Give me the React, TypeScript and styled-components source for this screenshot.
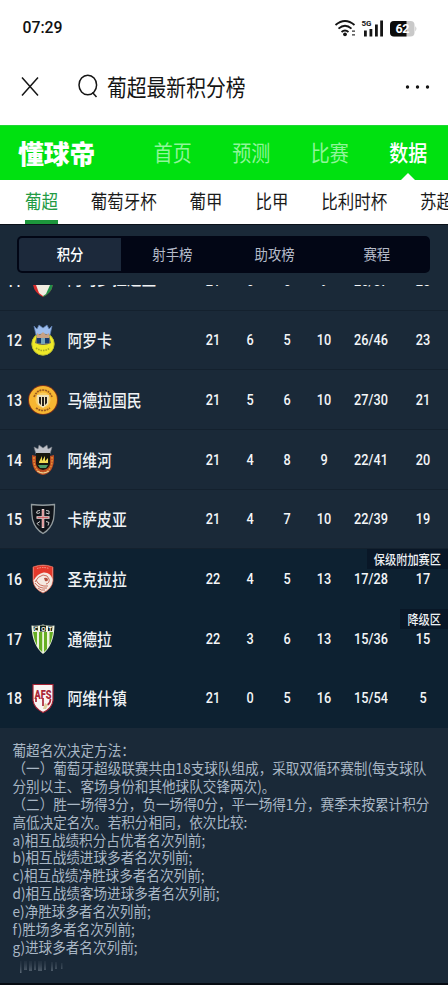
import type { ReactNode } from "react";
import styled, { createGlobalStyle, css } from "styled-components";

const GlobalStyle = createGlobalStyle`
  * {
    box-sizing: border-box;
  }
  body {
    margin: 0;
    background: #fff;
    font-family: "Noto Sans CJK SC", sans-serif;
  }
`;

// condensed look of the app font
const tall = css`
  display: inline-block;
  white-space: nowrap;
  transform: scaleY(1.14);
`;

const Page = styled.div`
  width: 448px;
  height: 1000px;
  overflow: hidden;
  display: flex;
  flex-direction: column;
  background: #fff;
`;

const StatusBar = styled.div`
  height: 56px;
  padding: 0 31px 0 22.5px;
  display: flex;
  align-items: center;
  justify-content: space-between;
`;

const Clock = styled.span`
  font: 500 15.8px/20px Roboto, sans-serif;
  color: #111;
`;

const SearchBar = styled.div`
  height: 69px;
  padding: 0 17px 7px 20px;
  display: flex;
  align-items: center;
`;

const SearchText = styled.span`
  ${tall}
  flex: 1;
  margin-left: 8px;
  font-size: 19.8px;
  line-height: 24px;
  color: #141414;
`;

const MainNav = styled.nav`
  height: 55px;
  display: flex;
  align-items: center;
  background: #00e110;
  border-top: 1px solid #1fd735;
`;

const Logo = styled.span`
  width: 133.5px;
  padding-left: 18px;
  font-size: 25.8px;
  line-height: 30px;
  font-weight: 900;
  color: #fff;
`;

const NavItem = styled.div<{ $active?: boolean }>`
  position: relative;
  width: 78.5px;
  height: 54px;
  padding-bottom: 3px;
  display: flex;
  align-items: center;
  justify-content: center;
  font-size: 19px;
  font-weight: ${(p) => (p.$active ? 500 : 400)};
  color: ${(p) => (p.$active ? "#fff" : "#90f69a")};
  ${(p) =>
    p.$active &&
    css`
      &::after {
        content: "";
        position: absolute;
        bottom: 0;
        left: 32px;
        border: 7px solid transparent;
        border-top: 0;
        border-bottom: 7px solid #fff;
      }
    `}
`;

const Label = styled.span`
  ${tall}
`;

const SubNav = styled.div`
  height: 44px;
  padding-left: 25px;
  display: flex;
  gap: 32.8px;
  overflow: hidden;
`;

const SubItem = styled.div<{ $active?: boolean }>`
  flex: none;
  height: 44px;
  font-size: 16.5px;
  line-height: 43px;
  color: ${(p) => (p.$active ? "#229a43" : "#1a1a1a")};
  border-bottom: 4px solid ${(p) => (p.$active ? "#1d963c" : "transparent")};
`;

const Panel = styled.main`
  height: 761px;
  background: #1a2938;
  border-top: 1px solid #0b1119;
  border-bottom: 2px solid #060b12;
`;

const SegmentWrap = styled.div`
  height: 60px;
  padding: 11px 18px 0 17px;
`;

const Segments = styled.div`
  height: 37px;
  padding: 2px;
  display: flex;
  border-radius: 5px;
  background: #020615;
  overflow: hidden;
`;

const Segment = styled.div<{ $active?: boolean }>`
  flex: 1;
  padding-bottom: 4px;
  display: flex;
  align-items: center;
  justify-content: center;
  font-size: 13.4px;
  font-weight: ${(p) => (p.$active ? 500 : 400)};
  color: ${(p) => (p.$active ? "#fff" : "#b5bbc9")};
  background: ${(p) => (p.$active ? "#1c293b" : "transparent")};
  border-radius: 3px 0 0 3px;
`;

const Row = styled.div<{ $dark?: boolean }>`
  position: relative;
  flex: none;
  height: 59.7px;
  padding-top: 1px;
  display: grid;
  grid-template-columns: 28px 30px 136.5px 37px 37px 37px 37px 57px 47px;
  align-items: center;
  background: ${(p) => (p.$dark ? "#0d2131" : "#1a2938")};
  border-bottom: 1px solid ${(p) => (p.$dark ? "#0d2131" : "#14212e")};
`;

const Rank = styled.span`
  ${tall}
  text-align: center;
  font: 500 14.2px/20px Roboto, sans-serif;
  letter-spacing: -0.4px;
  color: #f4f6f8;
  transform: scaleY(1.22);
`;

const Crest = styled.svg`
  display: block;
  width: 30px;
  height: 34px;
`;

const Team = styled.span`
  ${tall}
  padding-left: 9.5px;
  font-size: 14.8px;
  line-height: 20px;
  font-weight: 500;
  color: #f0f3f5;
`;

const Stat = styled.span`
  ${tall}
  text-align: center;
  font: 500 12.7px/20px Roboto, sans-serif;
  color: #f4f6f8;
  transform: scaleY(1.22);
`;

// the row above the fold, scrolled almost out of view
const Clip = styled.div`
  height: 25.5px;
  display: flex;
  flex-direction: column;
  justify-content: flex-end;
  overflow: hidden;

  ${Crest} {
    margin-top: 2px;
  }
  ${Team} {
    margin-top: -5px;
  }
`;

const Zone = styled.div`
  position: absolute;
  top: 0;
  right: 0;
  height: 20px;
  padding: 0 7px;
  font-size: 11.2px;
  line-height: 19px;
  font-weight: 500;
  color: #eef1f4;
  background: #091727;
`;

const Notes = styled.div`
  padding: 13.5px 0 0 12.5px;
  font-size: 13.6px;
  line-height: 17.95px;
  color: #a9b7c5;
`;

const NoteLine = styled.div`
  height: 17.95px;
  white-space: pre;
  transform: scaleY(1.08);
`;

const Ghost = styled.svg`
  display: block;
  margin: 2px 0 0 2px;
`;

const crests: Record<number, ReactNode> = {
  11: (
    <>
      <path d="M5 2h20v16q0 9-10 14Q5 27 5 18z" fill="#d92c2c" />
      <path d="M15 2h10v16q0 9-10 14z" fill="#21904a" />
      <path d="M8 20l5-3h5l4 3-4 9-3 2-4-3z" fill="#f1ece0" />
    </>
  ),
  12: (
    <>
      <circle cx="15" cy="21" r="11.2" fill="#efe928" stroke="#bfc02e" />
      <path d="M6 3l3 3 2-4 4 3 4-3 2 4 3-3-2 9H8z" fill="#9dbdec" stroke="#5d7eb3" strokeWidth=".7" />
      <path d="M9 12q6-3 12 0l2 8q-8 4-16 0z" fill="#6d6c62" />
      <path d="M9 10l3 2 3-3 3 3 3-2v5H9z" fill="#c8a183" />
      <path d="M9 15h5v5H9zm7 0h5v5h-5z" fill="#173b70" />
      <path d="M13 15h4v6h-4z" fill="#77a5b7" />
      <path d="M8 25q7 5 14 0" fill="none" stroke="#a5a528" strokeWidth="1.6" strokeDasharray="1.5 1" />
    </>
  ),
  13: (
    <>
      <circle cx="15" cy="17" r="15" fill="#7e3119" />
      <circle cx="15" cy="17" r="14" fill="#f6b632" />
      <path d="M6 14q3-7 9-7t9 7M8 25q7 5 14 0" fill="none" stroke="#9a5a20" strokeWidth="1.7" strokeDasharray="2 .8" />
      <circle cx="15" cy="17" r="7.5" fill="#f8cd62" />
      <path d="M9 12h12l-1 9-5 4-5-4z" fill="#eee2bd" />
      <path d="M11 14h2v8l-2-2zm3 0h2v9h-2zm3 0h2v6l-2 2z" fill="#25211c" />
    </>
  ),
  14: (
    <>
      <path d="M6 4l4 2 1-4 4 3 4-3 1 4 4-2-2 7H8z" fill="#bfc2c9" stroke="#737982" strokeWidth=".6" />
      <path d="M4 12q-1 18 11 20 12-2 11-20l-4 1H8z" fill="#b94b22" />
      <path d="M6 14q-1 14 9 16 10-2 9-16" fill="none" stroke="#e69336" strokeWidth="1.5" strokeDasharray="2 1" />
      <path d="M8 10h14v11q-1 5-7 6-6-1-7-6z" fill="#17180f" />
      <path d="M11 19l3-6v5l3-5v5l3-3v5h-9z" fill="#f0dc54" />
      <path d="M10 22h10l-2 3h-6z" fill="#4e9c69" />
      <path d="M9 28q6 4 12 0" fill="none" stroke="#e6d7a1" />
    </>
  ),
  15: (
    <>
      <path d="M3.5 2.5Q15 4 26.5 2.5q0 8-1 15Q23 27 15 31.5 7 27 4.5 17.5q-1-7-1-15z" fill="#10141a" stroke="#929b9e" strokeWidth="1.3" />
      <path d="M15 7v19M8.5 15.5h13" stroke="#f3dedc" strokeWidth="2.5" />
      <path d="M15 8v17M9.5 15.5h11" stroke="#c8545a" strokeWidth=".9" />
      <path d="M12 8.5q-3.5-.5-3.5 2.5 2 1 3.5-.5M18 8.5l3 .5v3l-3-1M12 19.5l-3 2 2 2M18 19.5l3 1-1 3" fill="none" stroke="#c9c9c9" strokeWidth="1" />
    </>
  ),
  16: (
    <>
      <path d="M5 5Q15 1 25 5v14q-1 8-10 12Q6 27 5 19z" fill="#f5e9e1" stroke="#d9563f" strokeWidth=".7" />
      <path d="M5.5 5q9.5-3 19 0v12q-2-7-9-6.5-6 1-10 8z" fill="#e4392b" />
      <path d="M7 20q3-6 8-7 5 0 6 4t-3 5M7 21q4 6 12 5M8 18q3 7 12 6M10 26q3 3 7 2" fill="none" stroke="#c4604e" strokeWidth=".9" />
      <path d="M16 16q4-1 4 2-1 2-3 1z" fill="#b3503d" />
      <path d="M9 6.5q6-2 12 0" fill="none" stroke="#f4a393" strokeDasharray="1.5 1" />
    </>
  ),
  17: (
    <>
      <path d="M3.5 3.5q6 1 11.5-1 5.5 2 11.5 1Q26 23 15 32 4 23 3.5 3.5z" fill="#eef4dd" />
      <path d="M5 10h4v14Q6 18 5 10zm6 0h3.2v20L11 27zm5 0h3v17l-3 3zm5.5 0H25q-1 8-3.5 13z" fill="#66ae23" />
      <path d="M5.5 4.5H10V9H6zm6.5-1h6v6h-6zm8 1h4.5L24 9h-4z" fill="#111e14" />
      <text x="6" y="8.8" fontFamily="Liberation Sans" fontSize="5.6" fontWeight="700" fill="#fff" textLength="18">
        COT
      </text>
    </>
  ),
  18: (
    <>
      <path d="M5 3.5h20v16q-1 8-10 12Q6 27 5 19.5z" fill="#faf5f3" stroke="#a52334" strokeWidth="1.2" />
      <text x="6.5" y="17.5" fontFamily="Roboto" fontSize="13" fontWeight="900" fill="#aa2738" textLength="17" lengthAdjust="spacingAndGlyphs">
        AFS
      </text>
      <path d="M8 17v4M15 17v8M22.5 18q0 4-3 6" fill="none" stroke="#aa2738" strokeWidth="1.7" />
      <path d="M15 28l2-6 3 2-2 4z" fill="#dfcf9d" />
    </>
  ),
};

type TeamRow = { rank: number; name: string; stats: string[]; zone?: string };

const rows: TeamRow[] = [
  { rank: 12, name: "阿罗卡", stats: ["21", "6", "5", "10", "26/46", "23"] },
  { rank: 13, name: "马德拉国民", stats: ["21", "5", "6", "10", "27/30", "21"] },
  { rank: 14, name: "阿维河", stats: ["21", "4", "8", "9", "22/41", "20"] },
  { rank: 15, name: "卡萨皮亚", stats: ["21", "4", "7", "10", "22/39", "19"] },
  { rank: 16, name: "圣克拉拉", stats: ["22", "4", "5", "13", "17/28", "17"], zone: "保级附加赛区" },
  { rank: 17, name: "通德拉", stats: ["22", "3", "6", "13", "15/36", "15"], zone: "降级区" },
  { rank: 18, name: "阿维什镇", stats: ["21", "0", "5", "16", "15/54", "5"] },
];

const notes = [
  "葡超名次决定方法：",
  "（一）葡萄牙超级联赛共由18支球队组成，采取双循环赛制(每支球队",
  "分别以主、客场身份和其他球队交锋两次)。",
  "（二）胜一场得3分，负一场得0分，平一场得1分，赛季末按累计积分",
  "高低决定名次。若积分相同，依次比较:",
  "a)相互战绩积分占优者名次列前;",
  "b)相互战绩进球多者名次列前;",
  "c)相互战绩净胜球多者名次列前;",
  "d)相互战绩客场进球多者名次列前;",
  "e)净胜球多者名次列前;",
  "f)胜场多者名次列前;",
  "g)进球多者名次列前;",
];

const TableRow = ({ rank, name, stats, zone }: TeamRow) => (
  <Row $dark={rank > 15}>
    <Rank>{rank}</Rank>
    <Crest viewBox="0 0 30 34">{crests[rank]}</Crest>
    <Team>{name}</Team>
    {stats.map((value, i) => (
      <Stat key={i}>{value}</Stat>
    ))}
    {zone && (
      <Zone>
        <Label>{zone}</Label>
      </Zone>
    )}
  </Row>
);

const StatusIcons = () => (
  <svg width="83" height="20" viewBox="334 18 83 20">
    <g fill="none" stroke="#151515" strokeWidth="1.9">
      <path d="M335.5 25q9.5-8 19 0" />
      <path d="M338.5 28.6q6.5-5.6 13 0" />
      <path d="M341.5 32q3.5-3 7 0" />
    </g>
    <circle cx="345" cy="34.3" r="1.9" fill="#151515" />
    <path d="M352 31.2h3M352 34.8h3" stroke="#333" strokeWidth="1.3" />
    <text x="361.5" y="26" fontFamily="Roboto" fontSize="8" fontWeight="700" fill="#151515">
      5G
    </text>
    <path d="M364 30.5h2.8v6H364zm5.5-1.5h2.8v7.5h-2.8zm5.5-4.5h2.8v12H375zm5.2-4h2.8v16h-2.8z" fill="#151515" />
    <rect x="390" y="21" width="24.5" height="15.5" rx="4" fill="#c9c9c9" />
    <path d="M394 21h12.5v15.5H394a4 4 0 0 1-4-4V25a4 4 0 0 1 4-4z" fill="#0b0b0b" />
    <path d="M415.3 26q2.2 2.8 0 5.5z" fill="#c9c9c9" />
    <text x="395.5" y="33.3" fontFamily="Roboto" fontSize="12.5" fontWeight="700" fill="#fff" textLength="14">
      62
    </text>
  </svg>
);

const App = () => {
  return (
    <Page>
      <GlobalStyle />
      <StatusBar>
        <Clock>07:29</Clock>
        <StatusIcons />
      </StatusBar>
      <SearchBar>
        <svg width="79" height="28" viewBox="20 73 79 28" fill="none" stroke="#151515" strokeWidth="1.5">
          <path d="M22 77.5l16 18M38 77.5l-16 18" />
          <ellipse cx="87.8" cy="85" rx="8.8" ry="9.8" />
          <path d="M92.5 92.5l4 4.5" />
        </svg>
        <SearchText>葡超最新积分榜</SearchText>
        <svg width="28" height="6" viewBox="0 0 28 6" fill="#151515">
          <circle cx="4.5" cy="3" r="1.7" />
          <circle cx="14.5" cy="3" r="1.7" />
          <circle cx="24.5" cy="3" r="1.7" />
        </svg>
      </SearchBar>
      <MainNav>
        <Logo>懂球帝</Logo>
        {["首页", "预测", "比赛", "数据"].map((item) => (
          <NavItem key={item} $active={item === "数据"}>
            <Label>{item}</Label>
          </NavItem>
        ))}
      </MainNav>
      <SubNav>
        {["葡超", "葡萄牙杯", "葡甲", "比甲", "比利时杯", "苏超"].map((item) => (
          <SubItem key={item} $active={item === "葡超"}>
            <Label>{item}</Label>
          </SubItem>
        ))}
      </SubNav>
      <Panel>
        <SegmentWrap>
          <Segments>
            {["积分", "射手榜", "助攻榜", "赛程"].map((item) => (
              <Segment key={item} $active={item === "积分"}>
                <Label>{item}</Label>
              </Segment>
            ))}
          </Segments>
        </SegmentWrap>
        <Clip>
          <TableRow rank={11} name="阿马多拉之星" stats={["21", "6", "6", "9", "26/37", "25"]} />
        </Clip>
        {rows.map((row) => (
          <TableRow key={row.rank} {...row} />
        ))}
        <Notes>
          {notes.map((line) => (
            <NoteLine key={line}>{line}</NoteLine>
          ))}
          <Ghost width="56" height="16" viewBox="0 0 56 16">
            <defs>
              <linearGradient id="fade" x1="0" y1="0" x2="0" y2="1">
                <stop offset="0" stopColor="#3c4a58" stopOpacity="0.2" />
                <stop offset="1" stopColor="#6c7986" stopOpacity="0.8" />
              </linearGradient>
            </defs>
            <path
              d="M5 2h1.5v12H5zm4 0h3v9H9zm5 0h3v10h-3zm5 0h2v9h-2zm4 0h4v10h-4zm6 0h2v9h-2zm7 1h2v9h-2zm4 0h2v7h-2zm6 1h1.5v6H46z"
              fill="url(#fade)"
            />
          </Ghost>
        </Notes>
      </Panel>
    </Page>
  );
};

export default App;
